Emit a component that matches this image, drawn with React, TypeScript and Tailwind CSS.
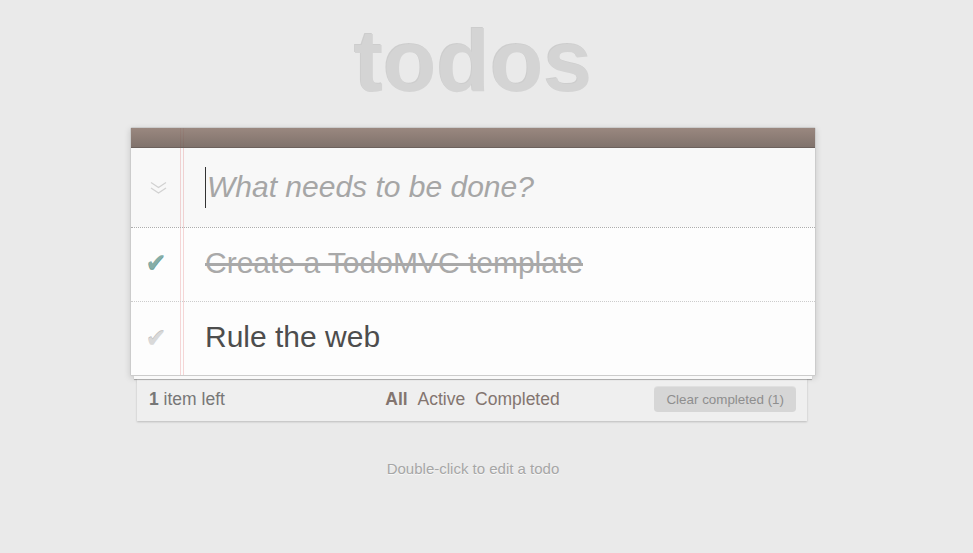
import React from "react";

export default function App() {
  return (
    <div className="min-h-[553px] bg-[#eaeaea] font-['Liberation_Sans',Arial,sans-serif] text-[#4d4d4d] overflow-hidden">
      <div className="ml-[130px] w-[686px] pt-[18px]">
        <h1 className="text-center text-[87.5px] leading-[87.5px] font-bold text-[#d4d4d4] [text-shadow:-1px_-1px_rgba(0,0,0,0.12)]">
          todos
        </h1>
        <div className="relative mt-[21px] border border-[#ccc] bg-[rgba(255,255,255,0.9)] rounded-t-[2px] shadow-[0_2px_6px_0_rgba(0,0,0,0.15)]">
          {/* margin lines */}
          <div className="absolute left-[49px] top-0 h-full w-[4px] border-x border-[#f5d6d6] z-0" />
          {/* header band */}
          <div className="relative z-10 h-[20px] border-b border-[#6c615c] bg-gradient-to-b from-[rgba(132,110,100,0.82)] to-[rgba(101,84,76,0.82)]" />
          {/* new todo */}
          <div className="relative flex h-[79px] items-center bg-[rgba(0,0,0,0.02)] pl-[74px]">
            <svg
              className="absolute left-[19px] top-[33px]"
              width="17"
              height="14"
              viewBox="0 0 17 14"
              fill="none"
              stroke="#d2d2d2"
              strokeWidth="1.3"
            >
              <path d="M1 1.5 L8.5 6.5 L16 1.5" />
              <path d="M1 7 L8.5 12 L16 7" />
            </svg>
            <span className="block h-[41px] w-px bg-[#333]" />
            <span className="ml-[1px] text-[30px] italic leading-[42px] text-[#a6a6a6]">
              What needs to be done?
            </span>
          </div>
          {/* list */}
          <ul className="relative border-t border-dotted border-[#adadad]">
            <li className="relative flex h-[74px] items-center border-b border-dotted border-[#ccc]">
              <span className="absolute left-0 top-0 flex h-full w-[50px] items-center justify-center pb-[3px] text-[25px] leading-none text-[#85ada7] [text-shadow:0_1px_0_#669991] font-['DejaVu_Sans',sans-serif]">
                ✔
              </span>
              <span className="pl-[74px] pb-[2px] text-[30px] leading-[36px] text-[#a9a9a9] line-through">
                Create a TodoMVC template
              </span>
            </li>
            <li className="relative flex h-[73px] items-center">
              <span className="absolute left-0 top-0 flex h-full w-[50px] items-center justify-center pt-[1px] text-[25px] leading-none text-[#d9d9d9] [text-shadow:0_-1px_0_#bfbfbf] font-['DejaVu_Sans',sans-serif]">
                ✔
              </span>
              <span className="pl-[74px] pb-[2px] text-[30px] leading-[36px] text-[#4d4d4d]">
                Rule the web
              </span>
            </li>
          </ul>
        </div>
        {/* stacked paper layer */}
        <div className="relative z-[1] mx-[4px] h-[3px] bg-[#fafafa] shadow-[0_1px_1px_rgba(0,0,0,0.3)]" />
        {/* footer */}
        <div className="relative ml-[7px] mr-[9px] h-[42px] bg-[#efefef] shadow-[0_1px_2px_rgba(0,0,0,0.2)] pt-[8px] pl-[12px] pr-[11px] text-[17.5px] leading-[25px] text-[#777]">
          <div className="relative flex items-center justify-between h-[25px]">
            <span>
              <strong className="font-bold">1</strong> item left
            </span>
            <span className="absolute inset-x-0 top-0 text-center text-[#83756f] pointer-events-none">
              <span className="mx-[2.5px] font-bold">All</span>{" "}
              <span className="mx-[2.5px]">Active</span>{" "}
              <span className="mx-[2.5px]">Completed</span>
            </span>
            <span className="relative rounded-[3.75px] bg-[rgba(0,0,0,0.1)] px-[12px] text-[13.4px] leading-[25px] text-[#8e8e8e] shadow-[0_-1px_0_0_rgba(0,0,0,0.06)]">
              Clear completed (1)
            </span>
          </div>
        </div>
        <p className="mt-[36px] text-center text-[15px] leading-[24.5px] text-[#a6a6a6] [text-shadow:0_1px_0_rgba(255,255,255,0.7)]">
          Double-click to edit a todo
        </p>
      </div>
    </div>
  );
}
